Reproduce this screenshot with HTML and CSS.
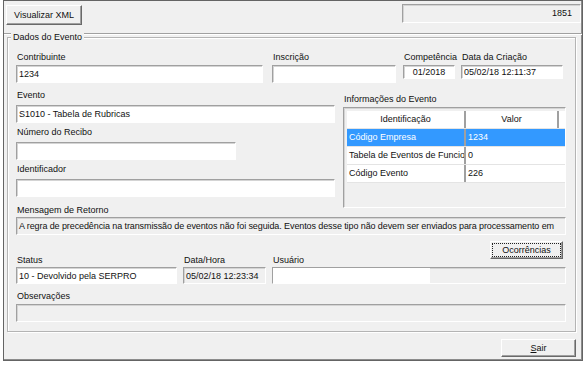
FILE: index.html
```html
<!DOCTYPE html>
<html lang="pt-BR">
<head>
    <meta charset="UTF-8">
    <title>Dados do Evento</title>
    <link rel="stylesheet" href="styles.css">
</head>
<body>

<div class="window">
    <div class="toolbar">
        <button class="btn btn-xml">Visualizar XML</button>
        <div class="box counter">1851</div>
    </div>

    <div class="group">
        <div class="legend">Dados do Evento</div>

        <div class="row row-top">
            <div class="field f-contrib">
                <label>Contribuinte</label>
                <div class="box">1234</div>
            </div>
            <div class="field f-insc">
                <label>Inscrição</label>
                <div class="box"></div>
            </div>
            <div class="field f-comp">
                <label>Competência</label>
                <div class="box short center">01/2018</div>
            </div>
            <div class="field f-data">
                <label>Data da Criação</label>
                <div class="box short">05/02/18 12:11:37</div>
            </div>
        </div>

        <div class="row row-mid">
            <div class="col-left">
                <div class="field">
                    <label>Evento</label>
                    <div class="box">S1010 - Tabela de Rubricas</div>
                </div>
                <div class="field f-recibo">
                    <label>Número do Recibo</label>
                    <div class="box"></div>
                </div>
                <div class="field">
                    <label>Identificador</label>
                    <div class="box"></div>
                </div>
            </div>
            <div class="col-right">
                <label>Informações do Evento</label>
                <div class="grid">
                    <div class="g-row g-head">
                        <div class="cell">Identificação</div>
                        <div class="cell">Valor</div>
                    </div>
                    <div class="g-row selected">
                        <div class="cell">Código Empresa</div>
                        <div class="cell">1234</div>
                    </div>
                    <div class="g-row">
                        <div class="cell">Tabela de Eventos de Funcionários</div>
                        <div class="cell">0</div>
                    </div>
                    <div class="g-row">
                        <div class="cell">Código Evento</div>
                        <div class="cell">226</div>
                    </div>
                </div>
            </div>
        </div>

        <div class="field f-msg">
            <label>Mensagem de Retorno</label>
            <div class="box readonly">A regra de precedência na transmissão de eventos não foi seguida. Eventos desse tipo não devem ser enviados para processamento em</div>
        </div>

        <div class="row row-status">
            <div class="field f-status">
                <label>Status</label>
                <div class="box">10 - Devolvido pela SERPRO</div>
            </div>
            <div class="field f-hora">
                <label>Data/Hora</label>
                <div class="box readonly">05/02/18 12:23:34</div>
            </div>
            <div class="field f-user">
                <div class="user-head">
                    <label>Usuário</label>
                    <button class="btn btn-ocor">Ocorrências</button>
                </div>
                <div class="box readonly user-box"><span class="user-fill"></span></div>
            </div>
        </div>

        <div class="field f-obs">
            <label>Observações</label>
            <div class="box readonly"></div>
        </div>
    </div>

    <div class="footer">
        <button class="btn btn-sair"><u>S</u>air</button>
    </div>
</div>

</body>
</html>
```

FILE: styles.css
```css
body {
    margin: 0;
    background-color: #fff;
    font-family: "Liberation Sans", Arial, sans-serif;
    font-size: 9px;
    color: #111;
}

.window {
    width: 580px;
    height: 361px;
    margin-left: 3px;
    box-sizing: border-box;
    border: 1px solid #646464;
    box-shadow: inset -1px -1px 0 #8c8c8c;
    background-color: #f0f0f0;
}

/* top bar */
.toolbar {
    height: 33px;
    box-sizing: border-box;
    display: flex;
    justify-content: space-between;
    align-items: flex-start;
    padding: 4px 0 0 2px;
    border-bottom: 1px solid #a0a0a0;
    box-shadow: 0 1px 0 #fff;
}

.btn {
    font: inherit;
    color: #111;
    background-color: #f0f0f0;
    border: 1px solid;
    border-color: #fff #696969 #696969 #fff;
    box-shadow: inset -1px -1px 0 #a0a0a0;
    padding: 0;
    box-sizing: border-box;
}

.btn-xml {
    width: 76px;
    height: 20px;
}

/* group box */
.group {
    margin: 3px 6px 0 3px;
    border: 1px solid #b4b4b4;
    box-shadow: inset 1px 1px 0 #fff, 1px 1px 0 #fff;
    padding: 0 9px 9px 8px;
}

.legend {
    width: max-content;
    margin: -7px 0 0 -5px;
    padding: 0 2px;
    line-height: 12px;
    background-color: #f0f0f0;
}

.row {
    display: flex;
}

label {
    display: block;
    line-height: 12px;
    padding-left: 1px;
    white-space: nowrap;
}

.box {
    height: 18px;
    box-sizing: border-box;
    margin-top: 2px;
    padding: 0 2px;
    line-height: 16px;
    background-color: #fff;
    border: 1px solid;
    border-color: #a0a0a0 #fff #fff #a0a0a0;
    box-shadow: inset 1px 1px 0 #d4d4d4;
    white-space: nowrap;
    overflow: hidden;
}

.box.short {
    height: 14px;
    line-height: 12px;
}

.box.center {
    text-align: center;
}

.box.readonly {
    background-color: #f0f0f0;
}

.box.counter {
    width: 179px;
    height: 19px;
    margin: -1px 1px 0 0;
    text-align: right;
    padding: 0 8px 0 5px;
    line-height: 17px;
    background-color: #f0f0f0;
}

/* first row */
.row-top {
    margin-top: 8px;
}

.f-contrib { width: 247px; }
.f-insc { width: 124px; margin-left: 9px; }
.f-comp { width: 52px; margin-left: 7px; }
.f-data { width: 102px; margin-left: 6px; }

/* middle */
.row-mid {
    margin-top: 6px;
    align-items: flex-start;
}

.col-left {
    width: 319px;
}

.col-left .box {
    margin-top: 4px;
}

.col-left .field + .field {
    margin-top: 3px;
}

.f-recibo .box {
    width: 220px;
}

.col-right {
    width: 223px;
    margin: 0 0 -11px 8px;
    padding-top: 4px;
}

.grid {
    height: 101px;
    box-sizing: border-box;
    margin-top: 2px;
    padding: 3px 0 0 3px;
    border: 1px solid;
    border-color: #a0a0a0 #fff #fff #a0a0a0;
    box-shadow: inset 1px 1px 0 #d4d4d4;
}

.g-row {
    display: grid;
    grid-template-columns: 119px 93px;
    height: 18px;
    box-sizing: border-box;
    background-color: #fff;
    border-bottom: 1px solid #e4e4e4;
}

.cell {
    line-height: 17px;
    padding: 0 2px;
    white-space: nowrap;
    overflow: hidden;
}

.g-row .cell:first-child {
    border-right: 2px solid #a0a0a0;
}

.g-head .cell {
    text-align: center;
    border-right: 2px solid #a0a0a0;
}

.g-row.selected {
    background-color: #3399ff;
    color: #fff;
}

/* message */
.f-msg {
    width: 550px;
    margin-top: 7px;
}

.f-msg .box {
    margin-top: 1px;
    letter-spacing: -0.1px;
}

/* status row */
.row-status {
    margin-top: 6px;
    align-items: flex-end;
}

.row-status .box {
    height: 17px;
    margin-top: 1px;
}

.f-status { width: 161px; }
.f-hora { width: 83px; margin-left: 6px; }
.f-user { width: 294px; margin-left: 6px; }

.user-head {
    display: flex;
    justify-content: space-between;
    align-items: flex-end;
}

.btn-ocor {
    width: 73px;
    height: 18px;
    margin: 0 3px 7px 0;
    outline: 1px dotted #222;
    outline-offset: -3px;
}

.user-box {
    padding: 0;
}

.user-fill {
    display: block;
    width: 157px;
    height: 100%;
    background-color: #fff;
}

/* observations */
.f-obs {
    width: 550px;
    margin-top: 6px;
}

/* bottom */
.footer {
    display: flex;
    justify-content: flex-end;
    padding: 7px 6px 0 0;
}

.btn-sair {
    width: 75px;
    height: 18px;
}
```
